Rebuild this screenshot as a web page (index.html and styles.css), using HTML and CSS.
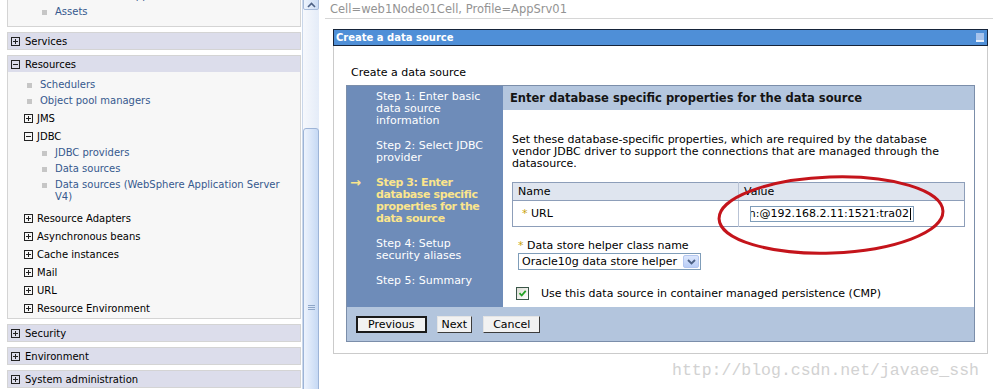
FILE: index.html
```html
<!DOCTYPE html>
<html lang="en">
<head>
    <meta charset="UTF-8">
    <title>Create a data source</title>
    <link rel="stylesheet" href="styles.css">
</head>
<body>
<div class="page">

    <div class="nav">
        <div class="group group-first">
            <ul class="tree">
                <li class="item l2"><span class="bullet"></span><a>Business-level applications</a></li>
                <li class="item l2"><span class="bullet"></span><a>Assets</a></li>
            </ul>
        </div>
        <div class="group">
            <div class="group-head">
                <svg class="tog" viewBox="0 0 9 9"><rect x=".5" y=".5" width="8" height="8" fill="none" stroke="#222"/><path d="M2 4.5h5M4.5 2v5" stroke="#222"/></svg>Services
            </div>
        </div>
        <div class="group">
            <div class="group-head">
                <svg class="tog" viewBox="0 0 9 9"><rect x=".5" y=".5" width="8" height="8" fill="none" stroke="#222"/><path d="M2 4.5h5" stroke="#222"/></svg>Resources
            </div>
            <ul class="tree tree-open">
                <li class="item l1"><span class="bullet"></span><a>Schedulers</a></li>
                <li class="item l1"><span class="bullet"></span><a>Object pool managers</a></li>
                <li class="node"><svg class="tog" viewBox="0 0 9 9"><rect x=".5" y=".5" width="8" height="8" fill="none" stroke="#222"/><path d="M2 4.5h5M4.5 2v5" stroke="#222"/></svg>JMS</li>
                <li class="node"><svg class="tog" viewBox="0 0 9 9"><rect x=".5" y=".5" width="8" height="8" fill="none" stroke="#222"/><path d="M2 4.5h5" stroke="#222"/></svg>JDBC</li>
                <li class="item l2"><span class="bullet"></span><a>JDBC providers</a></li>
                <li class="item l2"><span class="bullet"></span><a>Data sources</a></li>
                <li class="item l2 sub-end"><span class="bullet"></span><a>Data sources (WebSphere Application Server<br>V4)</a></li>
                <li class="node"><svg class="tog" viewBox="0 0 9 9"><rect x=".5" y=".5" width="8" height="8" fill="none" stroke="#222"/><path d="M2 4.5h5M4.5 2v5" stroke="#222"/></svg>Resource Adapters</li>
                <li class="node"><svg class="tog" viewBox="0 0 9 9"><rect x=".5" y=".5" width="8" height="8" fill="none" stroke="#222"/><path d="M2 4.5h5M4.5 2v5" stroke="#222"/></svg>Asynchronous beans</li>
                <li class="node"><svg class="tog" viewBox="0 0 9 9"><rect x=".5" y=".5" width="8" height="8" fill="none" stroke="#222"/><path d="M2 4.5h5M4.5 2v5" stroke="#222"/></svg>Cache instances</li>
                <li class="node"><svg class="tog" viewBox="0 0 9 9"><rect x=".5" y=".5" width="8" height="8" fill="none" stroke="#222"/><path d="M2 4.5h5M4.5 2v5" stroke="#222"/></svg>Mail</li>
                <li class="node"><svg class="tog" viewBox="0 0 9 9"><rect x=".5" y=".5" width="8" height="8" fill="none" stroke="#222"/><path d="M2 4.5h5M4.5 2v5" stroke="#222"/></svg>URL</li>
                <li class="node"><svg class="tog" viewBox="0 0 9 9"><rect x=".5" y=".5" width="8" height="8" fill="none" stroke="#222"/><path d="M2 4.5h5M4.5 2v5" stroke="#222"/></svg>Resource Environment</li>
            </ul>
        </div>
        <div class="group">
            <div class="group-head">
                <svg class="tog" viewBox="0 0 9 9"><rect x=".5" y=".5" width="8" height="8" fill="none" stroke="#222"/><path d="M2 4.5h5M4.5 2v5" stroke="#222"/></svg>Security
            </div>
        </div>
        <div class="group">
            <div class="group-head">
                <svg class="tog" viewBox="0 0 9 9"><rect x=".5" y=".5" width="8" height="8" fill="none" stroke="#222"/><path d="M2 4.5h5M4.5 2v5" stroke="#222"/></svg>Environment
            </div>
        </div>
        <div class="group">
            <div class="group-head">
                <svg class="tog" viewBox="0 0 9 9"><rect x=".5" y=".5" width="8" height="8" fill="none" stroke="#222"/><path d="M2 4.5h5M4.5 2v5" stroke="#222"/></svg>System administration
            </div>
        </div>
    </div>

    <div class="scrollbar">
        <div class="sb-up">
            <svg width="9" height="6" viewBox="0 0 9 6"><path d="M1 5l3.5-3.5L8 5" fill="none" stroke="#4d6185" stroke-width="1.6"/></svg>
        </div>
        <div class="sb-thumb"><span class="grip"></span></div>
    </div>

    <div class="main">
        <div class="crumb">Cell=web1Node01Cell, Profile=AppSrv01</div>

        <div class="panel">
            <div class="panel-title">
                <span>Create a data source</span>
                <span class="min-btn"></span>
            </div>
            <div class="panel-body">
                <div class="subtitle">Create a data source</div>

                <div class="wizard">
                    <div class="wizard-main">
                        <ul class="steps">
                            <li class="step"><span class="step-mark"></span><span>Step 1: Enter basic<br>data source<br>information</span></li>
                            <li class="step"><span class="step-mark"></span><span>Step 2: Select JDBC<br>provider</span></li>
                            <li class="step current"><span class="step-mark">&rarr;</span><span>Step 3: Enter<br>database specific<br>properties for the<br>data source</span></li>
                            <li class="step"><span class="step-mark"></span><span>Step 4: Setup<br>security aliases</span></li>
                            <li class="step"><span class="step-mark"></span><span>Step 5: Summary</span></li>
                        </ul>

                        <div class="content">
                            <div class="content-head">Enter database specific properties for the data source</div>
                            <div class="content-body">
                                <p class="intro">Set these database-specific properties, which are required by the database<br>vendor JDBC driver to support the connections that are managed through the<br>datasource.</p>

                                <table class="props">
                                    <tr>
                                        <th class="col-name">Name</th>
                                        <th>Value</th>
                                    </tr>
                                    <tr>
                                        <td class="col-name"><span class="req">*</span> URL</td>
                                        <td>
                                            <div class="text-input"><span>jdbc:oracle:thin:@192.168.2.11:1521:tra02</span><span class="caret"></span></div>
                                        </td>
                                    </tr>
                                </table>

                                <div class="field-label"><span class="req">*</span> Data store helper class name</div>
                                <div class="select">
                                    <span>Oracle10g data store helper</span>
                                    <span class="select-btn">
                                        <svg width="9" height="6" viewBox="0 0 9 6"><path d="M1 1l3.5 3.5L8 1" fill="none" stroke="#4d6185" stroke-width="1.8"/></svg>
                                    </span>
                                </div>

                                <div class="check-row">
                                    <span class="checkbox">
                                        <svg width="11" height="11" viewBox="0 0 11 11"><path d="M2.5 5.2l2.2 2.3 4-4.6" fill="none" stroke="#21a121" stroke-width="1.8"/></svg>
                                    </span>
                                    <span>Use this data source in container managed persistence (CMP)</span>
                                </div>
                            </div>
                        </div>
                    </div>

                    <div class="button-bar">
                        <button class="btn btn-default">Previous</button>
                        <button class="btn btn-next">Next</button>
                        <button class="btn btn-cancel">Cancel</button>
                    </div>
                </div>
            </div>
        </div>
    </div>

    <svg class="ink-circle" width="240" height="90" viewBox="0 0 240 90">
        <ellipse cx="118" cy="44" rx="112" ry="38" fill="none" stroke="#c4141b" stroke-width="3" transform="rotate(-2 118 44)"/>
    </svg>
    <div class="watermark">http://blog.csdn.net/javaee_ssh</div>
</div>
</body>
</html>
```

FILE: styles.css
```css
* {
    margin: 0;
    padding: 0;
    box-sizing: border-box;
}
body {
    font-family: "DejaVu Sans", sans-serif;
    font-size: 10px;
    color: #000;
    background: #fff;
    height: 389px;
    overflow: hidden;
}
.page {
    position: relative;
    display: flex;
    height: 389px;
    overflow: hidden;
}

/* left navigation */
.nav {
    width: 301px;
    flex-shrink: 0;
    padding-left: 7px;
    margin-top: -17px;
}
.group {
    border: 1px solid #d4d4d4;
    background: #f7f7f7;
    margin-bottom: 5px;
}
.group-first .tree {
    padding-bottom: 6px;
}
.group-head {
    height: 16px;
    display: flex;
    align-items: center;
    padding-left: 3px;
    background: #dcddeb;
}
.group-head .tog {
    margin-right: 5px;
}
.tog {
    width: 9px;
    height: 9px;
    flex-shrink: 0;
}
.tree {
    list-style: none;
    padding: 4px 0 0;
}
.tree-open {
    padding-top: 5px;
    padding-bottom: 1px;
}
.item {
    display: flex;
    align-items: flex-start;
    line-height: 12px;
    padding: 2px 0;
}
.item a {
    color: #36598e;
}
.bullet {
    width: 5px;
    height: 5px;
    background: #c6c6c6;
    margin: 4px 8px 0 0;
    flex-shrink: 0;
}
.l1 {
    padding-left: 19px;
}
.l2 {
    padding-left: 34px;
}
.sub-end {
    margin-bottom: 4px;
}
.node {
    display: flex;
    align-items: center;
    height: 18px;
    padding-left: 16px;
}
.node .tog {
    margin-right: 4px;
}

/* fake browser scrollbar of the nav frame */
.scrollbar {
    width: 17px;
    margin-left: 1px;
    flex-shrink: 0;
    border-left: 1px solid #cad7ea;
    background: linear-gradient(to right, #f6f8fc, #e4ecf8);
}
.sb-up {
    height: 16px;
    margin-top: -6px;
    border: 1px solid #a7bbda;
    border-radius: 2px;
    background: linear-gradient(to right, #eef4fd, #cbdcf5);
    display: flex;
    align-items: flex-end;
    justify-content: center;
    padding-bottom: 1px;
}
.sb-thumb {
    height: 358px;
    margin-top: 118px;
    border: 1px solid #9db4d7;
    border-radius: 3px;
    background: linear-gradient(to right, #edf3fd, #c6d9f4);
    display: flex;
    align-items: center;
    justify-content: center;
}
.grip {
    width: 7px;
    height: 5px;
    border-top: 1px solid #8ea6c8;
    border-bottom: 1px solid #8ea6c8;
    position: relative;
}
.grip::after {
    content: "";
    position: absolute;
    left: 0;
    right: 0;
    top: 1px;
    border-top: 1px solid #8ea6c8;
}

/* main area */
.main {
    flex: 1;
    padding-left: 6px;
}
.crumb {
    height: 19px;
    padding: 3px 0 0 5px;
    font-size: 11.5px;
    line-height: 13px;
    color: #939393;
    border-bottom: 1px solid #d6d6d6;
}
.panel {
    width: 655px;
    margin: 10px 0 0 8px;
}
.panel-title {
    height: 17px;
    border: 1px solid #16243a;
    background: #4f8fd7;
    color: #fff;
    font-weight: bold;
    padding-left: 2px;
    display: flex;
    align-items: center;
    justify-content: space-between;
}
.min-btn {
    width: 8px;
    height: 9px;
    margin-right: 3px;
    background: #a6c3ec;
    border-bottom: 2px solid #e8f0fc;
}
.panel-body {
    border: 1px solid #cbcbcb;
    border-top: none;
    padding: 21px 12px 11px;
}
.subtitle {
    font-size: 11px;
    line-height: 12px;
    padding-left: 5px;
    margin-bottom: 6px;
}

/* wizard */
.wizard {
    border: 1px solid #7b8eaa;
}
.wizard-main {
    display: flex;
    height: 221px;
}
.steps {
    width: 156px;
    flex-shrink: 0;
    list-style: none;
    background: #6e8cb9;
    color: #fff;
    font-size: 11px;
    line-height: 12px;
    padding-top: 5px;
}
.step {
    display: flex;
    margin-bottom: 13px;
}
.step-mark {
    width: 29px;
    flex-shrink: 0;
    padding-left: 3px;
    font-size: 13px;
}
.step.current {
    color: #fbe58c;
    font-weight: bold;
    letter-spacing: -0.4px;
}
.content {
    flex: 1;
    display: flex;
    flex-direction: column;
}
.content-head {
    height: 24px;
    background: #b4c6de;
    color: #141414;
    font-size: 11.5px;
    font-weight: bold;
    padding-left: 7px;
    display: flex;
    align-items: center;
}
.content-body {
    flex: 1;
    background: #fff;
    font-size: 11px;
    padding: 24px 0 0 9px;
}
.intro {
    line-height: 12px;
}
.props {
    width: 453px;
    margin-top: 12px;
    border-collapse: collapse;
    border: 1px solid #8d9eb9;
}
.props th {
    height: 18px;
    background: #dfe5ef;
    font-weight: normal;
    text-align: left;
    padding-left: 5px;
    border-bottom: 1px solid #8d9eb9;
}
.props td {
    height: 26px;
}
.props .col-name {
    width: 226px;
}
.props td.col-name {
    padding-left: 9px;
}
.props th + th,
.props td + td {
    border-left: 1px solid #b9c3d5;
}
.req {
    color: #c9a30c;
}
.text-input {
    width: 164px;
    height: 16px;
    margin-left: 11px;
    border: 1px solid #7f9db9;
    display: flex;
    justify-content: flex-end;
    align-items: center;
    overflow: hidden;
    white-space: nowrap;
    padding-right: 2px;
}
.text-input span {
    flex-shrink: 0;
}
.text-input .caret {
    width: 1px;
    height: 12px;
    background: #000;
    margin-left: 1px;
}
.field-label {
    margin-top: 13px;
    line-height: 12px;
    padding-left: 6px;
}
.select {
    width: 183px;
    height: 17px;
    margin: 1px 0 0 6px;
    border: 1px solid #7f9db9;
    display: flex;
    align-items: center;
    padding-left: 3px;
}
.select-btn {
    margin-left: auto;
    margin-right: 1px;
    width: 16px;
    height: 13px;
    border: 1px solid #b3c6ef;
    border-radius: 2px;
    background: linear-gradient(#dce7fd, #b9cdf6);
    display: flex;
    align-items: center;
    justify-content: center;
}
.check-row {
    display: flex;
    align-items: center;
    margin: 17px 0 0 4px;
}
.checkbox {
    width: 13px;
    height: 13px;
    margin-right: 12px;
    border: 1px solid #3a5648;
    background: linear-gradient(135deg, #dcdcd4, #fff);
    display: flex;
    align-items: center;
    justify-content: center;
}
.button-bar {
    height: 34px;
    background: #b3c5dd;
    display: flex;
    align-items: center;
    gap: 10px;
    padding-left: 9px;
}
.btn {
    height: 17px;
    padding: 0 4px;
    font-family: "DejaVu Sans", sans-serif;
    font-size: 11px;
    color: #000;
    background: #f2f2f2;
    border: 1px solid;
    border-color: #e4e4e4 #3c3c3c #3c3c3c #e4e4e4;
}
.btn-default {
    padding: 0 10px;
    border: 2px solid #1a1a1a;
}
.btn-next {
    padding: 0 4px;
}
.btn-cancel {
    margin-left: 1px;
    padding: 0 9px;
}

/* annotations drawn over the screenshot */
.ink-circle {
    position: absolute;
    left: 713px;
    top: 171px;
}
.watermark {
    position: absolute;
    left: 672px;
    top: 361px;
    font-family: "Liberation Mono", monospace;
    font-size: 16.5px;
    color: #d2d2d2;
}
```
